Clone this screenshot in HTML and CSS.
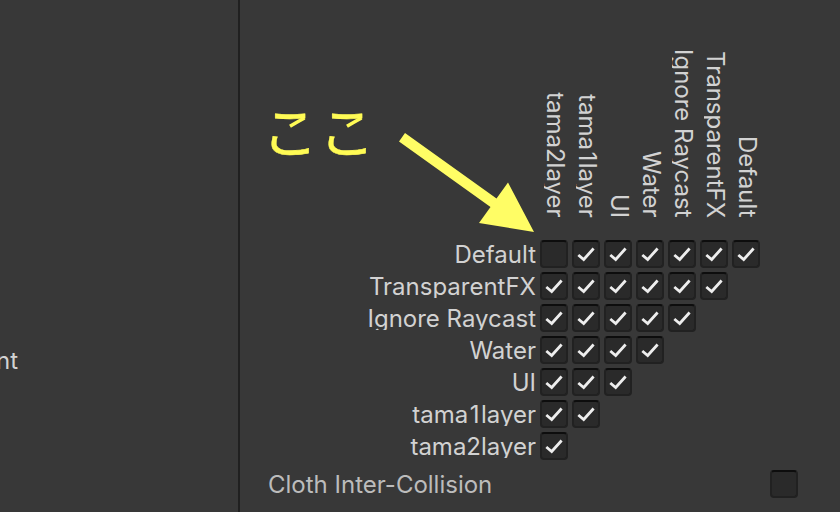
FILE: index.html
```html
<!DOCTYPE html>
<html lang="ja">
<head>
<meta charset="utf-8">
<title>Layer Collision Matrix</title>
<link rel="stylesheet" href="styles.css">
</head>
<body>
<div class="window">
  <aside class="sidebar"><span class="category">nt</span></aside>
  <main class="panel">
    <div class="columns">
      <span class="col">tama2layer</span><span class="col">tama<span class="one">1</span>layer</span><span class="col">UI</span><span class="col">Water</span><span class="col">Ignore Raycast</span><span class="col">TransparentFX</span><span class="col">Default</span>
    </div>
    <div class="matrix" id="matrix"></div>
    <div class="option"><span class="option-name">Cloth Inter-Collision</span><span class="box"></span></div>
  </main>
  <div class="note">ここ</div>
  <svg class="arrow" viewBox="0 0 840 512">
    <path d="M405 133L496.500 198.500L508 182.500L534 232L479 223L490.500 207L399 141.500Z"/>
    <path class="hook" d="M304.500 118Q298 121.500 290 126.200M361.500 118Q355 121.500 347 126.200"/>
  </svg>
</div>
<script src="matrix.js"></script>
</body>
</html>
```
FILE: styles.css
```css
body {
  margin: 0;
  background: #383838;
  color: #d2d2d2;
  font: 24px/28px Inter, "Noto Sans CJK JP", sans-serif;
}
.window {
  position: relative;
  display: flex;
  width: 840px;
  height: 512px;
  overflow: hidden;
}
.sidebar {
  box-sizing: border-box;
  width: 240px;
  border-right: 2px solid #202020;
  padding-top: 347px;
}
.category {
  display: block;
  width: 18px;
  direction: rtl;
  white-space: nowrap;
}
.panel {
  flex: 1;
}
.columns {
  display: flex;
  align-items: flex-end;
  gap: 4px;
  height: 218px;
  margin: 0 0 22px 300px;
}
.col {
  width: 28px;
  line-height: 26px;
  writing-mode: vertical-rl;
  text-orientation: sideways;
  white-space: nowrap;
  clip-path: inset(0 0 0 4px);
}
.one {
  padding-inline: 1.5px;
}
.row {
  display: flex;
  gap: 4px;
  height: 28px;
  margin-bottom: 4px;
}
.name {
  width: 296px;
  line-height: 30px;
  text-align: right;
  clip-path: inset(0 0 2px);
}
.box {
  box-sizing: border-box;
  width: 28px;
  height: 28px;
  border: 2px solid #212121;
  border-top-color: #0d0d0d;
  border-radius: 4px;
  background: #2a2a2a;
}
.tick {
  display: block;
  width: 24px;
  height: 24px;
  fill: none;
  stroke: #eee;
  stroke-width: 2.8;
}
.option {
  display: flex;
  justify-content: space-between;
  padding: 6px 42px 0 28px;
}
.option-name {
  color: #bcbcbc;
  line-height: 30px;
}
.note {
  position: absolute;
  left: 262px;
  top: 97px;
  color: #fffb55;
  font: 56px/64px "Noto Sans CJK JP", sans-serif;
  letter-spacing: 1px;
  -webkit-text-stroke: 0.4px #fffb55;
}
.arrow {
  position: absolute;
  inset: 0;
  width: 840px;
  height: 512px;
  fill: #fffd65;
}
.hook {
  fill: none;
  stroke: #fffb55;
  stroke-width: 3.6;
}
```
FILE: matrix.js
```js
const layers = ["Default", "TransparentFX", "Ignore Raycast", "Water", "UI", "tama1layer", "tama2layer"];
const tick = '<svg class="tick" viewBox="0 0 24 24"><path d="M4.300 13L9.700 17.500L19.600 6.500"/></svg>';

document.getElementById("matrix").innerHTML = layers.map((name, row) => {
  let cells = "";
  for (let col = 0; col < layers.length - row; col++) {
    const ignored = row === 0 && col === 0;
    cells += `<span class="box">${ignored ? "" : tick}</span>`;
  }
  const label = name.replace("1", '<span class="one">1</span>');
  return `<div class="row"><span class="name">${label}</span>${cells}</div>`;
}).join("");
```
